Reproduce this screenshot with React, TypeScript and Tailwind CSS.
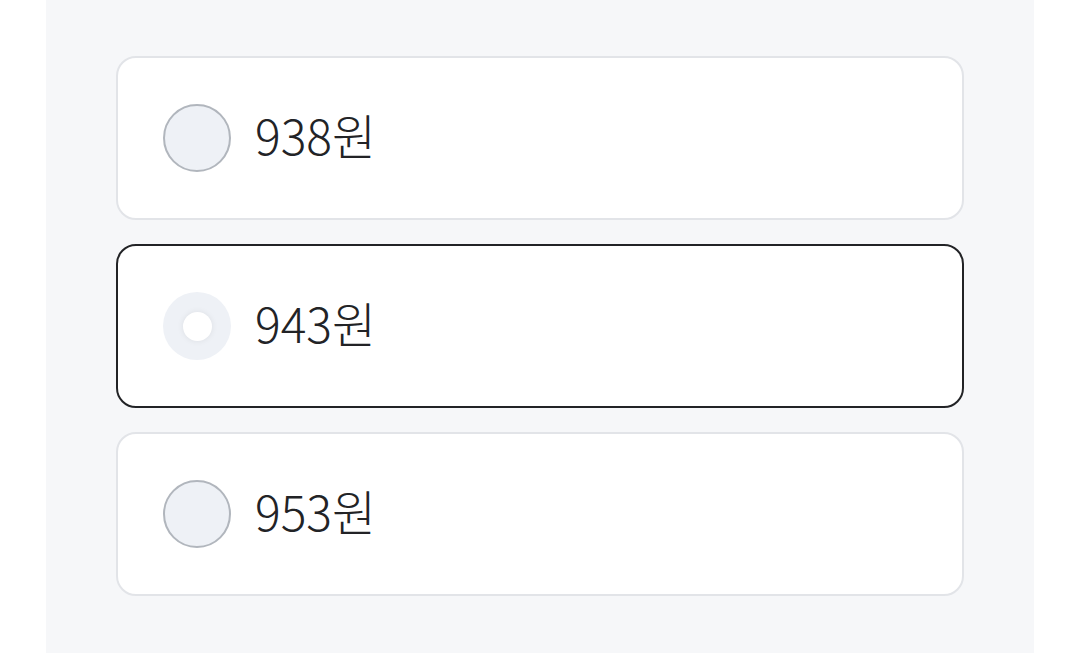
const options = [
  { id: "a", label: "938원" },
  { id: "b", label: "943원" },
  { id: "c", label: "953원" },
];

function Radio({ checked }: { checked: boolean }) {
  if (checked) {
    return (
      <span className="flex h-[68px] w-[68px] shrink-0 items-center justify-center rounded-full bg-[#eef1f6]">
        <span className="h-[29px] w-[29px] rounded-full bg-white shadow-[0_0_6px_rgba(0,0,0,0.08)]" />
      </span>
    );
  }
  return (
    <span className="block h-[68px] w-[68px] shrink-0 rounded-full border-2 border-[#b1b6bd] bg-[#eef1f6]" />
  );
}

export default function App() {
  const selected = "b";

  return (
    <div className="min-h-[653px] w-full bg-white">
      <main className="mx-[46px] flex min-h-[653px] flex-col gap-6 bg-[#f6f7f9] px-[70px] pt-14">
        {options.map((opt) => {
          const checked = opt.id === selected;
          return (
            <label
              key={opt.id}
              className={
                checked
                  ? "flex h-[164px] items-center gap-6 rounded-[20px] border-2 border-[#222326] bg-white pl-[45px]"
                  : "flex h-[164px] items-center gap-6 rounded-[20px] border-2 border-[#e2e4e8] bg-white pl-[45px]"
              }
            >
              <Radio checked={checked} />
              <span className="pb-2 font-['Noto_Sans_CJK_KR',sans-serif] text-[48px] font-light leading-none text-[#222326]">
                {opt.label}
              </span>
            </label>
          );
        })}
      </main>
    </div>
  );
}
